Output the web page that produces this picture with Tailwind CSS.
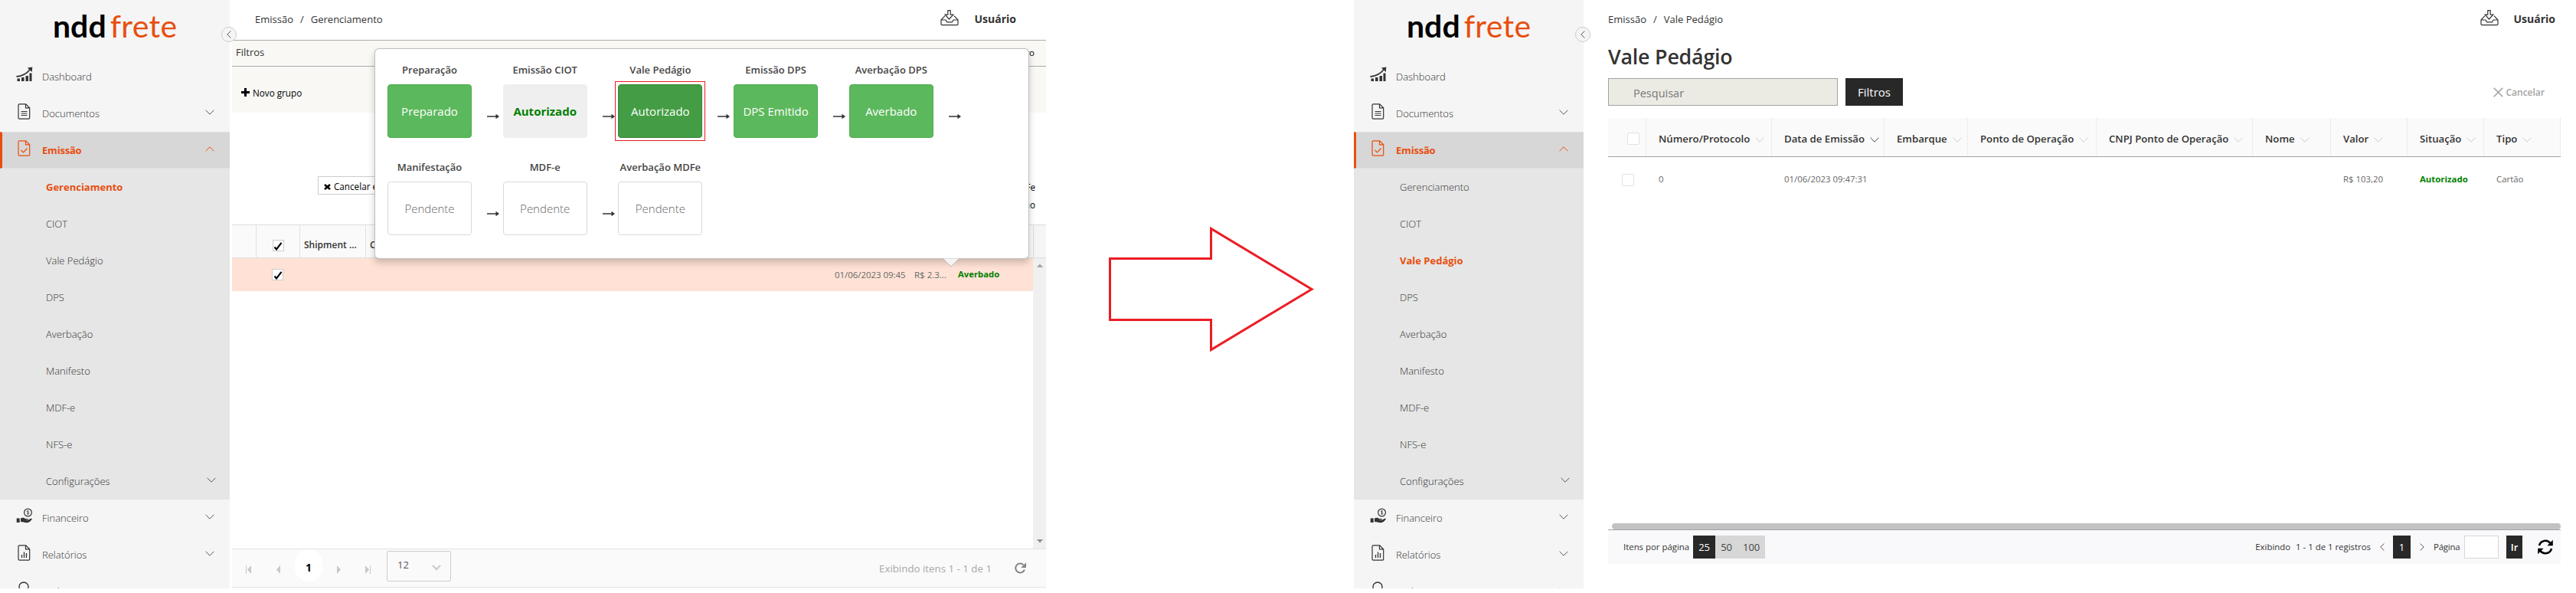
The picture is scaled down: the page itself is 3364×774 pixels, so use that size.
<!DOCTYPE html>
<html lang="pt-BR">
<head>
    <meta charset="UTF-8">
    <meta name="viewport" content="width=device-width, initial-scale=1.0">
    <title>nddfrete - Vale Pedágio</title>
    <script src="https://cdn.jsdelivr.net/npm/@tailwindcss/browser@4"></script>
</head>
<body class="bg-white font-['Open_Sans','Noto_Sans',sans-serif] text-[#333] overflow-hidden">

<!-- Shared icons -->
<svg class="hidden">
    <symbol id="down" viewBox="0 0 12 7"><path d="M.6.8 6 6.2 11.4.8" fill="none" stroke="currentColor"/></symbol>
    <symbol id="up" viewBox="0 0 12 7"><path d="M.6 6.2 6 .8l5.400 5.400" fill="none" stroke="currentColor"/></symbol>
    <symbol id="chart" viewBox="0 0 22 20"><path d="M1.500 15.500h3.500V19H1.500zM7 14h3.500v5H7zM12.500 12H16v7h-3.500zM17.500 8.500h3V19h-3z" fill="currentColor"/><path d="M.5 13C8 12.600 14 9 18.800 3" fill="none" stroke="currentColor" stroke-width="1.800"/><path d="M14.800 1.600 21.300.4l-.6 6.500z" fill="currentColor"/></symbol>
    <symbol id="doc" viewBox="0 0 17 21"><path d="M2.500.8h8.200l5 5v12.900a1.500 1.500 0 0 1-1.500 1.500H2.500A1.500 1.500 0 0 1 1 18.700V2.300A1.500 1.500 0 0 1 2.500.8zM10.500.8v5h5" fill="none" stroke="currentColor" stroke-width="1.200"/></symbol>
    <symbol id="money" viewBox="0 0 22 20"><circle cx="15.500" cy="6" r="4.900" fill="none" stroke="currentColor" stroke-width="1.200"/><path d="M17 4.400c-.7-.8-2.900-.8-2.900.4 0 1.400 3 .8 3 2.200 0 1.200-2.300 1.300-3.100.4M15.500 3v6" fill="none" stroke="currentColor" stroke-width=".7"/><path d="M.7 13.500h4V19h-4zM6 13.600c2.500-1.500 4.500-.6 6 .4h3c1.200 0 1.200 1.400 0 1.600h-3.500c2 .8 4.600.5 6-.8 1.300-1.200 3.200-1.500 3.500-.6-1.600 3-4.400 5-7.500 5-2.800 0-4.500-1.200-7.500-1.200z" fill="currentColor"/></symbol>
    <symbol id="person" viewBox="0 0 17 21"><circle cx="8" cy="7" r="6" fill="none" stroke="currentColor" stroke-width="1.300"/><path d="M1 21c0-5 3-8 7-8s7 3 7 8" fill="none" stroke="currentColor" stroke-width="1.300"/></symbol>
    <symbol id="inbox" viewBox="0 0 24 21"><path d="M9.800.7h3.400v5.500h3.600L11.500 12 6.200 6.200h3.600zM6 7.600 1 13v5.600c0 .6.500 1.100 1.100 1.100h19.800c.6 0 1.100-.5 1.100-1.100V13l-5-5.400M1 13h6l1.600 2.800h6.800L17 13h6" fill="none" stroke="currentColor" stroke-width="1.200"/></symbol>
    <symbol id="check" viewBox="0 0 12 12"><path d="M1.500 7.600 4 10.400 10.500 1.800" fill="none" stroke="currentColor" stroke-width="2.200"/></symbol>
    <symbol id="arrow" viewBox="0 0 16 8"><path d="M0 4h13" stroke="currentColor" stroke-width="1.500"/><path d="M11.500.8 16 4l-4.500 3.200z" fill="currentColor"/></symbol>
</svg>

<div class="relative flex h-[774px] w-[3364px]">

    <!-- Gerenciamento -->
    <aside data-active="Gerenciamento" class="relative h-[768px] w-[300px] shrink-0 bg-[#f5f5f5]"></aside>

    <main class="relative ml-[3px] w-[1063px] shrink-0">
        <header class="flex h-[52px] items-center pl-[30px] text-[13px]">
            <span>Emissão</span><span class="ml-[9px]">/</span><span class="ml-[9px]">Gerenciamento</span>
            <svg class="mt-[-6px] ml-auto h-[21px] w-6"><use href="#inbox"/></svg>
            <span class="mt-[-2px] mr-[39px] ml-[21px] text-sm font-bold">Usuário</span>
        </header>
        <div class="flex h-[35px] items-center justify-between border-y border-[#a9acac] bg-[#f9f8f5] pr-[15px] pb-px pl-[5px] text-[13px]">
            <span>Filtros</span><span class="text-[11.500px] text-black">Novo filtro</span>
        </div>
        <div class="flex h-[60px] items-center gap-1 bg-[#f9f8f5] pt-[9px] pl-3 text-[11.700px] text-black">
            <svg class="mt-[-2px] h-[11px] w-[11px]" viewBox="0 0 11 11"><path d="M5.500 0v11M0 5.500h11" stroke="#000" stroke-width="3"/></svg>
            Novo grupo
        </div>
        <div class="flex h-[146px] justify-between pt-[83px] pl-28 text-[11.700px] text-black">
            <div class="flex h-6 w-[150px] items-center gap-1 border border-[#ccc] pt-[3px] pl-[7px] whitespace-nowrap">
                <svg class="h-2 w-[9px]" viewBox="0 0 9 8"><path d="m1 1 7 6M8 1 1 7" stroke="#000" stroke-width="2.600"/></svg>
                Cancelar emissão
            </div>
            <div class="mr-[14px] pt-[3px] text-right leading-[23px]">Emitir MDFe<br>Averbação</div>
        </div>

        <div class="flex h-11 border-y border-[#ddd] bg-[#fafafa] text-xs font-semibold">
            <div class="w-8 border-r border-[#e2e2e2]"></div>
            <div class="flex w-[57px] items-center justify-center border-r border-[#e2e2e2] pt-[11px]">
                <span class="flex h-[15px] w-[15px] items-center justify-center border border-[#ccc] bg-white text-black"><svg class="h-3 w-3"><use href="#check"/></svg></span>
            </div>
            <div class="flex w-[86px] items-center border-r border-[#e2e2e2] pt-[10px] pl-[5px]">Shipment ...</div>
            <div class="flex items-center pt-[10px] pl-[5px]">CIOT</div>
            <div class="ml-auto w-[17px] border-l border-[#ddd] bg-[#f5f5f5]"></div>
        </div>
        <div class="flex h-[379px]">
            <div class="flex-1">
                <div class="flex h-[43px] items-center bg-[#ffe2d5] text-[11.500px] text-[#666]">
                    <span class="ml-[52px] flex h-[15px] w-[15px] items-center justify-center border border-[#ccc] bg-white text-black"><svg class="h-3 w-3"><use href="#check"/></svg></span>
                    <span class="ml-auto w-[104px] tracking-[-0.050px]">01/06/2023 09:45</span>
                    <span class="w-[57px]">R$ 2.3...</span>
                    <span class="w-[98px] text-[11.300px] font-bold text-[#008000]">Averbado</span>
                </div>
            </div>
            <div class="flex w-[17px] flex-col items-center justify-between bg-[#f0f0f0] py-[7px]">
                <svg class="h-[5px] w-2" viewBox="0 0 8 5"><path d="M0 5 4 .5 8 5z" fill="#a3a3a3"/></svg>
                <svg class="h-[5px] w-2" viewBox="0 0 8 5"><path d="M0 0 4 4.500 8 0z" fill="#8f8f8f"/></svg>
            </div>
        </div>

        <footer class="flex h-[51px] items-center border-y border-[#e2e2e2] bg-[#fafafa] text-[#c8c8c8]">
            <svg class="mt-1 ml-[18px] h-[11px] w-[7px]" viewBox="0 0 7 11"><path d="M.5 0v11" stroke="currentColor"/><path d="M7 0 2 5.500l5 5.500z" fill="currentColor"/></svg>
            <svg class="mt-1 ml-[33px] h-[11px] w-[5px]" viewBox="0 0 5 11"><path d="M5 0 0 5.500 5 11z" fill="currentColor"/></svg>
            <span class="mt-[-7px] ml-[19px] flex h-[42px] w-9 items-center justify-center rounded-[18px] bg-white pt-[6px] text-sm font-bold text-black">1</span>
            <svg class="mt-1 ml-[19px] h-[11px] w-[5px]" viewBox="0 0 5 11"><path d="m0 0 5 5.500L0 11z" fill="currentColor"/></svg>
            <svg class="mt-1 ml-[32px] h-[11px] w-[7px]" viewBox="0 0 7 11"><path d="M6.500 0v11" stroke="currentColor"/><path d="m0 0 5 5.500L0 11z" fill="currentColor"/></svg>
            <div class="mt-[-6px] ml-[21px] flex h-[40px] w-[84px] items-center justify-between rounded-xs border border-[#ccc] pr-3 pl-[13px] text-[13px] text-[#555]">
                <span class="mt-[-2px]">12</span>
                <svg class="mt-1 h-2 w-3" viewBox="0 0 12 8"><path d="m1 1 5 5 5-5" fill="none" stroke="#ccc" stroke-width="2.300"/></svg>
            </div>
            <span class="ml-auto pt-[2px] text-[13.300px] text-[#a8a8a8]">Exibindo itens 1 - 1 de 1</span>
            <svg class="mr-[26px] ml-[30px] h-[15px] w-[15px]" viewBox="0 0 15 15"><path d="M12.900 9.600A6 6 0 1 1 11.500 3.200" fill="none" stroke="#858585" stroke-width="2"/><path d="M15 .3V7H8.200z" fill="#858585"/></svg>
        </footer>

        <!-- Popover with the steps of the selected shipment -->
        <div class="absolute top-[63px] left-[186px] h-[275px] w-[855px] rounded-md border border-black/25 bg-white shadow-[0_5px_10px_rgba(0,0,0,0.2)]">
            <div class="flex pt-[17px] pl-4" id="steps-1"></div>
            <div class="flex pt-[28px] pl-4" id="steps-2"></div>
            <svg class="absolute top-[273px] left-[741px] h-3 w-[22px]" viewBox="0 0 22 12"><path d="M.5.5 11 11 21.500.5" fill="#f4f4f4" stroke="#b9aba5" stroke-width=".8"/></svg>
        </div>
    </main>

    <!-- Arrow between the two screens -->
    <div class="w-[402px] shrink-0 pt-[294px] pl-20">
        <svg class="h-[168px] w-[272px]" viewBox="0 0 272 168" fill="none" stroke="#ed1c24" stroke-width="3"><path d="M3.500 43.500h132V4.500L267 83.500l-131.500 79v-39.000H3.500z"/></svg>
    </div>

    <!-- Vale Pedágio -->
    <aside data-active="Vale Pedágio" class="relative h-[768px] w-[300px] shrink-0 bg-[#f5f5f5]"></aside>

    <main class="ml-8 w-[1264px] shrink-0">
        <header class="flex h-[52px] items-center text-[13px]">
            <span>Emissão</span><span class="ml-[9px]">/</span><span class="ml-[9px]">Vale Pedágio</span>
            <svg class="mt-[-6px] ml-auto h-[21px] w-6"><use href="#inbox"/></svg>
            <span class="mt-[-2px] mr-[27px] ml-[20px] text-sm font-bold">Usuário</span>
        </header>
        <h1 class="h-[50px] text-[26.800px] leading-[43px] font-semibold tracking-[-0.2px]">Vale Pedágio</h1>
        <div class="flex h-9 w-[1244px] items-center">
            <div class="flex h-9 w-[300px] items-center border border-[#a3a3a3] bg-[#ebebe4] pt-[3px] pl-8 text-[14.500px] text-[#777]">Pesquisar</div>
            <button class="ml-[10px] h-9 w-[75px] bg-[#282828] text-[15px] text-white">Filtros</button>
            <div class="ml-auto flex items-center gap-[3px] pr-[21px] text-xs font-semibold text-[#a3a3a3]">
                <svg class="h-[13px] w-[13px]" viewBox="0 0 13 13"><path d="m.7.7 11.600 11.600M12.300.7.7 12.300" stroke="currentColor" stroke-width="1.600"/></svg>
                <span class="pt-[2px]">Cancelar</span>
            </div>
        </div>
        <div class="mt-4 flex h-[51px] w-[1244px] border-b border-[#a3a3a3] bg-[#fafafa]" id="grid-head"></div>
        <div class="flex h-[478px] w-[1244px] text-[11.400px] text-[#666]">
            <span class="mt-[22px] ml-[18px] h-4 w-4 rounded-xs border border-[#e2e2e2] bg-white"></span>
            <span class="mt-5 ml-8 w-[164px]">0</span>
            <span class="mt-5 w-[730px]">01/06/2023 09:47:31</span>
            <span class="mt-5 w-[100px]">R$ 103,20</span>
            <span class="mt-5 w-[100px] font-bold text-[#008000]">Autorizado</span>
            <span class="mt-5">Cartão</span>
        </div>
        <div class="ml-[5px] h-2 w-[1239px] rounded-full bg-[#c2c2c2]"></div>
        <footer class="flex h-[45px] w-[1244px] items-center border-t border-[#a3a3a3] bg-[#f9f9fb] pl-5 text-[11.400px]">
            <span>Itens por página</span>
            <div class="ml-[5px] flex h-[30px] bg-[#d7d7d7] text-[13px] leading-[30px] text-[#444]">
                <span class="w-[29px] bg-[#282828] text-center text-white">25</span>
                <span class="w-[29px] text-center">50</span>
                <span class="w-9 text-center">100</span>
            </div>
            <span class="ml-auto">Exibindo</span>
            <span class="ml-[7px]">1 - 1 de 1 registros</span>
            <svg class="ml-3 h-[10px] w-[6px]" viewBox="0 0 6 10"><path d="M5.400.5.800 5l4.600 4.500" fill="none" stroke="#555"/></svg>
            <span class="ml-[11px] h-[30px] w-[23px] bg-[#282828] text-center text-[13px] leading-[30px] text-white">1</span>
            <svg class="ml-3 h-[10px] w-[6px]" viewBox="0 0 6 10"><path d="M.6.5 5.200 5 .6 9.500" fill="none" stroke="#555"/></svg>
            <span class="ml-3 w-[35px] tracking-[-0.2px]">Página</span>
            <span class="ml-[5px] h-[30px] w-[45px] border border-[#d7d7d7] bg-white"></span>
            <span class="ml-[10px] h-[30px] w-[21px] bg-[#282828] text-center text-[13px] leading-[30px] font-semibold text-white">Ir</span>
            <svg class="mr-[10px] ml-5 h-5 w-5" viewBox="0 0 20 20"><path d="M2 8a8.200 8.200 0 0 1 14.500-3M18 12a8.200 8.200 0 0 1-14.500 3" fill="none" stroke="#000" stroke-width="2.600"/><path d="M19.800.8v7.400h-7.400zM.2 19.200v-7.400h7.400z" fill="#000"/></svg>
        </footer>
    </main>
</div>

<script>
    const menu = [
        ["Dashboard", '<svg class="h-5 w-[22px]"><use href="#chart"/></svg>', false],
        ["Documentos", '<svg class="h-[21px] w-[17px]"><use href="#doc"/><path d="M4.500 10.500h8M4.500 13h8M4.500 15.500h8" stroke="currentColor"/></svg>', true],
    ];
    const menuEnd = [
        ["Financeiro", '<svg class="h-5 w-[22px]"><use href="#money"/></svg>', true],
        ["Relatórios", '<svg class="h-[21px] w-[17px]"><use href="#doc"/><path d="M5.500 17v-4M8.500 17V9.500M11.500 17v-6" stroke="currentColor" stroke-width="1.300"/></svg>', true],
        ["Cadastros", '<svg class="h-[21px] w-[17px]"><use href="#person"/></svg>', true],
    ];
    const submenu = ["Gerenciamento", "CIOT", "Vale Pedágio", "DPS", "Averbação", "Manifesto", "MDF-e", "NFS-e", "Configurações"];

    function menuRow(item) {
        return `
            <div class="flex h-12 shrink-0 items-center pr-5">
                <span class="mt-[-6px] flex w-[55px] justify-center pl-2">${item[1]}</span>
                <span class="pt-[2px] text-[13px] font-light">${item[0]}</span>
                ${item[2] ? '<svg class="mt-[-4px] ml-auto h-[7px] w-3 text-[#555]"><use href="#down"/></svg>' : ""}
            </div>`;
    }

    document.querySelectorAll("aside").forEach(aside => {
        aside.innerHTML = `
            <div class="flex h-full flex-col overflow-hidden">
                <div class="flex h-[76px] shrink-0 pl-[69px] font-['Lato',sans-serif] text-[41px] leading-[68px]">
                    <span class="font-bold text-black">ndd</span><span class="ml-[5px] tracking-[0.300px] text-[#e84e0f]">frete</span>
                </div>
                ${menu.map(menuRow).join("")}
                <div class="flex h-12 shrink-0 items-center border-y border-l-3 border-y-[#dedede] border-l-[#e84e0f] bg-[#d7d7d7] pr-5 text-[#e84e0f]">
                    <span class="mt-[-6px] flex w-[52px] justify-center pl-[5px]"><svg class="h-[21px] w-[17px]"><use href="#doc"/><path d="m4.500 13 3 3 5-5.500" fill="none" stroke="currentColor" stroke-width="1.200"/></svg></span>
                    <span class="pt-[2px] text-[13px] font-bold tracking-[-0.2px]">Emissão</span>
                    <svg class="mt-[-4px] ml-auto h-[7px] w-3"><use href="#up"/></svg>
                </div>
                <div class="shrink-0 bg-[#e6e6e6]">
                    ${submenu.map(name => `
                        <div class="flex h-12 items-center pt-[2px] pr-[18px] pl-[60px] text-[13px] ${name === aside.dataset.active ? "font-bold text-[#e84e0f]" : "font-light"}">
                            ${name}
                            ${name === "Configurações" ? '<svg class="mt-[-6px] ml-auto h-[7px] w-3 text-[#555]"><use href="#down"/></svg>' : ""}
                        </div>`).join("")}
                </div>
                ${menuEnd.map(menuRow).join("")}
            </div>
            <div class="absolute top-[35px] left-[289px] z-10 flex h-5 w-5 items-center justify-center rounded-full border border-[#ccc] bg-[#f5f5f5]">
                <svg class="h-[10px] w-[6px]" viewBox="0 0 6 10"><path d="M5.400.5.800 5l4.600 4.500" fill="none" stroke="#555"/></svg>
            </div>`;
    });

    const green = "border-[#4cae4c] bg-[#5cb85c] text-white";
    const pending = "border-[#d9d9d9] bg-white font-light text-[#666]";
    const steps1 = [
        ["Preparação", "Preparado", green],
        ["Emissão CIOT", "Autorizado", "border-[#efefef] bg-[#efefef] font-bold text-[#008000]"],
        ["Vale Pedágio", "Autorizado", "border-[#398439] bg-[#449d44] text-white", true],
        ["Emissão DPS", "DPS Emitido", green],
        ["Averbação DPS", "Averbado", green],
    ];
    const steps2 = [
        ["Manifestação", "Pendente", pending],
        ["MDF-e", "Pendente", pending],
        ["Averbação MDFe", "Pendente", pending],
    ];

    function drawSteps(id, steps, lastArrow) {
        document.getElementById(id).innerHTML = steps.map((s, i) => `
            <div class="flex w-[150.700px] items-end">
                <div class="w-[110px]">
                    <p class="mb-[9px] text-center text-[13px] leading-5 font-semibold whitespace-nowrap text-[#444]">${s[0]}</p>
                    <div class="relative flex h-[70px] items-center justify-center rounded-sm border text-[15px] ${s[2]}">
                        ${s[1]}
                        ${s[3] ? '<span class="absolute -inset-[5px] border border-[#e81c24]"></span>' : ""}
                    </div>
                </div>
                ${i < steps.length - 1 || lastArrow ? '<svg class="mb-6 ml-5 h-2 w-4"><use href="#arrow"/></svg>' : ""}
            </div>`).join("");
    }
    drawSteps("steps-1", steps1, true);
    drawSteps("steps-2", steps2, false);

    // [title, column width in px]
    const columns = [["Número/Protocolo", 164], ["Data de Emissão", 147], ["Embarque", 109], ["Ponto de Operação", 168], ["CNPJ Ponto de Operação", 204], ["Nome", 102], ["Valor", 100], ["Situação", 100], ["Tipo", 100]];
    document.getElementById("grid-head").innerHTML = `
        <div class="flex w-[50px] items-center border-r border-[#ececec] pl-[25px]"><span class="mt-1 h-4 w-4 rounded-xs border border-[#e2e2e2] bg-white"></span></div>` +
        columns.map(c => `
        <div class="flex items-center gap-[7px] border-r border-[#ececec] pt-[5px] pl-4 text-[13.200px] font-semibold whitespace-nowrap" style="width:${c[1]}px">
            ${c[0]}
            <svg class="mt-[2px] h-[7px] w-3 shrink-0 ${c[0] === "Data de Emissão" ? "text-[#444]" : "text-[#ccc]"}"><use href="#down"/></svg>
        </div>`).join("");
</script>
</body>
</html>
